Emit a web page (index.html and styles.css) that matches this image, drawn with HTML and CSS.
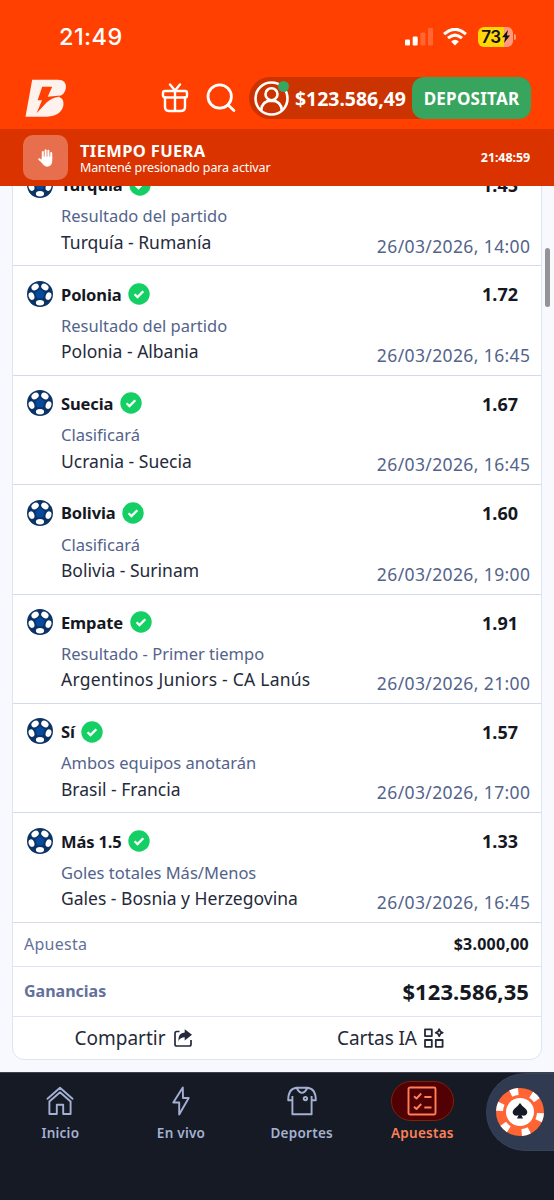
FILE: index.html
```html
<!DOCTYPE html>
<html lang="es">
<head>
<meta charset="utf-8">
<title>Apuestas</title>
<link rel="stylesheet" href="styles.css">
</head>
<body>
<svg class="defs" width="0" height="0">
  <symbol id="ball" viewBox="0 0 26 26">
    <circle cx="13" cy="13" r="13" fill="#0b3365"/>
    <g fill="#fff">
      <ellipse cx="8.1" cy="6" rx="3.9" ry="3" transform="rotate(-35 8.1 6)"/>
      <ellipse cx="17.9" cy="6" rx="3.9" ry="3" transform="rotate(35 17.9 6)"/>
      <ellipse cx="4.5" cy="15.1" rx="2.8" ry="3.9" transform="rotate(-18 4.5 15.1)"/>
      <ellipse cx="21.5" cy="15.1" rx="2.8" ry="3.9" transform="rotate(18 21.5 15.1)"/>
      <ellipse cx="13" cy="21.8" rx="4.1" ry="2.7"/>
    </g>
    <path d="M13 7.6 18.2 11.4 16.2 17.8H9.8L7.8 11.4Z" fill="#064a9e" stroke="#0b3365" stroke-width=".8"/>
  </symbol>
  <symbol id="check" viewBox="0 0 22 22">
    <circle cx="11" cy="11" r="10.7" fill="#14cf63"/>
    <path d="m6.6 11.2 2.9 2.9 5.8-5.9" fill="none" stroke="#fff" stroke-width="2.3"/>
  </symbol>
</svg>
<div class="app">
  <div class="status">
    <span class="clock">21:49</span>
    <span class="indicators">
      <svg width="28" height="18" viewBox="0 0 28 18" fill="#fff">
        <rect y="11.5" width="5" height="6" rx="1.3"/><rect x="7.7" y="8.5" width="5" height="9" rx="1.3"/>
        <g opacity=".2"><rect x="15.4" y="4.5" width="5" height="13" rx="1.3"/><rect x="23" y="0" width="5" height="17.5" rx="1.3"/></g>
      </svg>
      <svg class="wifi" width="24" height="18" viewBox="0 0 24 18">
        <g fill="none" stroke="#fff" stroke-width="3.1"><path d="M1.1 6.2Q12-3.6 22.9 6.2"/><path d="M5 10.2Q12 4 19 10.2"/></g>
        <path d="M8.1 13.4Q12 9.9 15.9 13.4L12 17.4Z" fill="#fff"/>
      </svg>
      <span class="battery"><span>73</span><svg width="8" height="13" viewBox="0 0 8 13"><path d="M6 0 0 7.2H3.3L2 13 8 5.6H4.8Z" fill="#111"/></svg></span><i class="tip"></i>
    </span>
  </div>
  <header class="header">
    <svg class="logo" width="42" height="38" viewBox="0 0 42 38">
      <path d="M7.2.8H33Q42 1 40.8 9.5 39.8 15.5 33.5 17.7 39.5 19.5 38.4 26.5 36 36.9 22 37.7H0.5Z" fill="#fff1eb"/>
      <path d="M17.2 7.7H27.2L22.7 17.8 35.5 16.4 33.6 17.7Q26.5 19 21.5 23.5L11.6 34.2 17 21.3H12.6Z" fill="#ff4000"/>
    </svg>
    <svg class="gift" width="28" height="30" viewBox="0 0 28 30" fill="none" stroke="#fff" stroke-width="2.4" stroke-linecap="round" stroke-linejoin="round"><rect x="2" y="8" width="24" height="6.5" rx="2"/><path d="M4 14.5V24Q4 28 8 28H20Q24 28 24 24V14.5M14 8V28M9 1.5 14 7.5 19 1.5"/></svg>
    <svg class="search" width="31" height="30" viewBox="0 0 31 30" fill="none" stroke="#fff" stroke-width="2.8" stroke-linecap="round"><circle cx="13.7" cy="13.5" r="11.7"/><path d="m22.1 21.9 5.8 5.6"/></svg>
    <div class="wallet">
      <span class="avatar"><svg width="35" height="35" viewBox="0 0 35 35" fill="none" stroke="#fff" stroke-width="2.6"><circle cx="17.5" cy="17.5" r="16"/><circle cx="17.5" cy="13.2" r="6"/><path d="M7.2 29.4Q7.8 19.8 17.5 19.6 27.2 19.8 27.8 29.4"/></svg><i class="online"></i></span>
      <span class="balance">$123.586,49</span>
      <button class="deposit">DEPOSITAR</button>
    </div>
  </header>
  <div class="timeout">
    <span class="hand"><svg width="16" height="18" viewBox="0 0 16 18" fill="none" stroke="#fff" stroke-width="2" stroke-linecap="round"><path d="M4.8 9V3M7.6 9V1.2M10.4 9V1.7M13.2 10V4M1.3 10.2 4.5 13"/><path d="M4.8 8.5H13.2V12.5Q12.8 16.5 9 16.7 6.6 16.7 4 12.3Z" fill="#fff"/></svg></span>
    <div class="timeout-text"><b>TIEMPO FUERA</b><span>Mantené presionado para activar</span></div>
    <b class="timer">21:48:59</b>
  </div>
  <main class="content">
    <section class="ticket">
      <article class="leg"><svg class="ball"><use href="#ball"/></svg><div class="pick"><h3>Turquía<svg class="check"><use href="#check"/></svg></h3><p class="market">Resultado del partido</p><p class="match">Turquía - Rumanía</p></div><div class="side"><b>1.45</b><time>26/03/2026, 14:00</time></div></article>
      <article class="leg"><svg class="ball"><use href="#ball"/></svg><div class="pick"><h3>Polonia<svg class="check"><use href="#check"/></svg></h3><p class="market">Resultado del partido</p><p class="match">Polonia - Albania</p></div><div class="side"><b>1.72</b><time>26/03/2026, 16:45</time></div></article>
      <article class="leg"><svg class="ball"><use href="#ball"/></svg><div class="pick"><h3>Suecia<svg class="check"><use href="#check"/></svg></h3><p class="market">Clasificará</p><p class="match">Ucrania - Suecia</p></div><div class="side"><b>1.67</b><time>26/03/2026, 16:45</time></div></article>
      <article class="leg"><svg class="ball"><use href="#ball"/></svg><div class="pick"><h3>Bolivia<svg class="check"><use href="#check"/></svg></h3><p class="market">Clasificará</p><p class="match">Bolivia - Surinam</p></div><div class="side"><b>1.60</b><time>26/03/2026, 19:00</time></div></article>
      <article class="leg"><svg class="ball"><use href="#ball"/></svg><div class="pick"><h3>Empate<svg class="check"><use href="#check"/></svg></h3><p class="market">Resultado - Primer tiempo</p><p class="match wide">Argentinos Juniors - CA Lanús</p></div><div class="side"><b>1.91</b><time>26/03/2026, 21:00</time></div></article>
      <article class="leg"><svg class="ball"><use href="#ball"/></svg><div class="pick"><h3>Sí<svg class="check"><use href="#check"/></svg></h3><p class="market">Ambos equipos anotarán</p><p class="match">Brasil - Francia</p></div><div class="side"><b>1.57</b><time>26/03/2026, 17:00</time></div></article>
      <article class="leg"><svg class="ball"><use href="#ball"/></svg><div class="pick"><h3>Más 1.5<svg class="check"><use href="#check"/></svg></h3><p class="market">Goles totales Más/Menos</p><p class="match">Gales - Bosnia y Herzegovina</p></div><div class="side"><b>1.33</b><time>26/03/2026, 16:45</time></div></article>
      <div class="stake"><span>Apuesta</span><b>$3.000,00</b></div>
      <div class="winnings"><b class="label">Ganancias</b><b class="amount">$123.586,35</b></div>
      <div class="actions">
        <a><span>Compartir</span><svg width="18" height="18" viewBox="0 0 18 18"><path d="M5.5 2.5H2.8Q1 2.5 1 4.3V15.2Q1 17 2.8 17H15.2Q17 17 17 15.2V11" fill="none" stroke="#252a3b" stroke-width="1.7"/><path d="M10.7.3 18 5.7 10.7 11.4V8.3Q7 8 4.3 12 4 3.8 10.7 3.5Z" fill="#252a3b"/></svg></a>
        <a><span>Cartas IA</span><svg width="20" height="20" viewBox="0 0 20 20" fill="none" stroke="#252a3b" stroke-width="1.8" stroke-linejoin="round"><rect x="1" y="1.3" width="6.8" height="6.8"/><rect x="1" y="12" width="6.8" height="6.8"/><rect x="11.8" y="12" width="6.8" height="6.8"/><path d="M15.2 1.2 16.4 3.6 18.7 4.7 16.4 5.8 15.2 8.2 14 5.8 11.7 4.7 14 3.6Z"/></svg></a>
      </div>
    </section>
    <i class="scrollbar"></i>
  </main>
  <nav class="nav">
    <a><span class="ico"><svg width="28" height="30" viewBox="0 0 28 30" fill="none" stroke="#a4b1d2" stroke-width="1.9" stroke-linejoin="round" stroke-linecap="round"><path d="M1.5 12.8 14 1.8 26.5 12.8M3.4 15.5V28H10.8V18.7H17.2V28H24.6V15.5L14 6.3Z"/></svg></span>Inicio</a>
    <a><span class="ico"><svg width="18" height="30" viewBox="0 0 18 30" fill="none" stroke="#a4b1d2" stroke-width="1.9" stroke-linejoin="round"><path d="M10.8 1.5 1.3 16.5H7.2V28.5L16.7 12H11Z"/></svg></span>En vivo</a>
    <a><span class="ico"><svg width="30" height="30" viewBox="0 0 30 30" fill="none" stroke="#a4b1d2" stroke-width="1.9" stroke-linejoin="round"><path d="M9.5 1.7H20.5Q28.8 2.5 28.8 14.3H24.6V28.3H5.4V14.3H1.2Q1.2 2.5 9.5 1.7ZM9.5 1.7Q15 12 20.5 1.7M5.4 15V10M24.6 15V10"/><circle cx="18.4" cy="12.6" r="1.7"/></svg></span>Deportes</a>
    <a class="active"><span class="ico"><svg width="30" height="30" viewBox="0 0 30 30" fill="none" stroke="#ff8057" stroke-width="1.9" stroke-linejoin="round"><rect x="1.5" y="1.5" width="27" height="27" rx="1.5"/><path d="m7 10.2 2.5 2.3 4.7-5M7 20.7 9.5 23l4.7-5M17.3 11H24.5M17.3 21.5H24.5"/></svg></span>Apuestas</a>
    <div class="casino"><svg width="48" height="48" viewBox="0 0 48 48"><circle cx="24" cy="24" r="24" fill="#ff6434"/><circle cx="24" cy="24" r="20.5" fill="none" stroke="#fff" stroke-width="7" stroke-dasharray="22 38" transform="rotate(3 24 24)" pathLength="360"/><circle cx="24" cy="24" r="14" fill="#fff"/><path d="M24 15Q26 18 29.3 20.6C33.5 24.2 30.5 29.2 25.5 27.2L27 30.5H21L22.5 27.2C17.5 29.2 14.5 24.2 18.7 20.6Q22 18 24 15Z" fill="#151a24"/></svg></div>
  </nav>
</div>
</body>
</html>
```
FILE: styles.css
```css
* { box-sizing: border-box; }
body { margin: 0; font-family: "Noto Sans", sans-serif; color: #151823; }
svg { display: block; flex: none; }
.defs { position: absolute; }
.app { width: 554px; height: 1200px; display: flex; flex-direction: column; overflow: hidden; background: #f7f9fe; white-space: nowrap; }
.status { flex: none; height: 67px; padding: 6px 38px 0 59px; background: #ff4000; display: flex; align-items: center; justify-content: space-between; color: #fff; font-family: Inter, sans-serif; }
.clock { font-size: 23.5px; font-weight: 500; letter-spacing: .4px; }
.indicators { display: flex; align-items: center; }
.wifi { margin-left: 10px; }
.battery { margin-left: 11px; width: 35px; height: 20px; border-radius: 6px; background: linear-gradient(90deg, #ffd60a 74%, #ff9b7a 74%); display: flex; align-items: center; justify-content: center; gap: 1px; color: #111; font-size: 17px; font-weight: 600; letter-spacing: -.5px; }
.tip { width: 2px; height: 6px; margin-left: 1px; background: #ff9b7a; border-radius: 0 2px 2px 0; }
.header { flex: none; height: 62px; background: #ff4000; display: flex; align-items: center; padding: 0 23px 0 25px; }
.gift { margin-left: 94px; }
.search { margin-left: 17px; }
.wallet { margin-left: 12px; flex: 1; height: 42px; display: flex; align-items: center; background: #cb3301; border-radius: 21px 12px 12px 21px; padding-left: 5px; }
.avatar { position: relative; }
.online { position: absolute; right: 0; top: 0; width: 11px; height: 11px; border-radius: 50%; background: #37a660; }
.balance { flex: 1; color: #fff; font-weight: 700; font-size: 19.5px; letter-spacing: -.05px; padding-left: 6px; }
.deposit { border: 0; width: 119px; height: 42px; border-radius: 12px; background: #37a55d; color: #fff; font: 700 17px "Noto Sans", sans-serif; letter-spacing: .25px; padding: 0; }
.timeout { flex: none; height: 57px; background: #db3300; color: #fff; display: flex; align-items: center; padding: 0 24px 0 23px; }
.hand { width: 45px; height: 45px; border-radius: 10px; background: #e76f4d; display: flex; align-items: center; justify-content: center; }
.timeout-text { margin-left: 12px; padding-top: 2px; display: flex; flex-direction: column; }
.timeout-text b { font-size: 16.5px; line-height: 18px; letter-spacing: .35px; }
.timeout-text span { font-size: 12.5px; line-height: 15px; letter-spacing: -.13px; }
.timer { margin-left: auto; font-size: 12.5px; letter-spacing: -.1px; }
.content { position: relative; flex: 1; min-height: 0; overflow: hidden; padding: 0 12px; }
.ticket { margin-top: -30px; height: 904px; border: 1px solid #dfe4f2; border-radius: 12px; background: #fff; }
.leg { height: 109.4px; border-bottom: 1.5px solid #d3dbeb; display: flex; padding: 14px 11px 0 14px; }
.ball { width: 26px; height: 26px; margin-top: .5px; }
.pick { margin-left: 8px; flex: 1; }
.pick h3 { margin: 0; height: 27.4px; display: flex; align-items: center; gap: 7px; font-size: 16.5px; letter-spacing: -.12px; }
.check { width: 22px; height: 22px; margin-left: -.4px; }
.pick p { margin: 0; line-height: 26px; }
.pick .market { margin-top: 5px; font-size: 16.5px; color: #53638b; }
.pick .match { margin-top: -.5px; font-size: 17.5px; color: #252a3b; }
.pick .wide { letter-spacing: .24px; }
.side { display: flex; flex-direction: column; align-items: flex-end; }
.side b { line-height: 28px; font-size: 18px; margin-right: 12px; }
.side time { margin-top: 33.5px; margin-right: -.4px; line-height: 26px; font-size: 17.5px; letter-spacing: .38px; color: #53638b; }
.stake, .winnings { display: flex; align-items: center; justify-content: space-between; padding: 0 12px 0 11px; border-bottom: 1px solid #dfe4f2; }
.stake { height: 44px; color: #63719a; font-size: 16px; letter-spacing: .25px; }
.stake b { color: #151823; }
.winnings { height: 50px; }
.label { color: #63719a; font-size: 16px; }
.amount { font-size: 22px; letter-spacing: .08px; }
.actions { display: flex; height: 42px; }
.actions a { width: 50%; display: flex; align-items: center; justify-content: center; gap: 8px; font-size: 19px; color: #252a3b; }
.actions a:last-child { padding-right: 37px; gap: 7px; letter-spacing: -.1px; }
.actions a:first-child { padding-right: 24px; }
.scrollbar { position: absolute; right: 4px; top: 62px; width: 5px; height: 59px; border-radius: 3px; background: #929497; }
.nav { flex: none; position: relative; height: 128px; background: #151a24; display: flex; border-top: 1px solid #3c414b; }
.nav a { width: 120.7px; display: flex; flex-direction: column; align-items: center; padding-top: 8px; color: #a4b1d2; font-size: 13.5px; font-weight: 600; line-height: 20px; letter-spacing: .25px; }
.ico { height: 40px; width: 63px; margin-bottom: 2px; display: flex; align-items: center; justify-content: center; }
.active .ico { background: #510004; border: 1px solid #832007; border-radius: 20px; }
.nav a.active { color: #ff8057; }
.casino { position: absolute; right: 0; top: 0; width: 68px; height: 78px; border-radius: 39px 0 0 39px; background: #303b52; border: 1px solid #374157; border-right: 0; padding: 14px 0 0 9px; }
```
